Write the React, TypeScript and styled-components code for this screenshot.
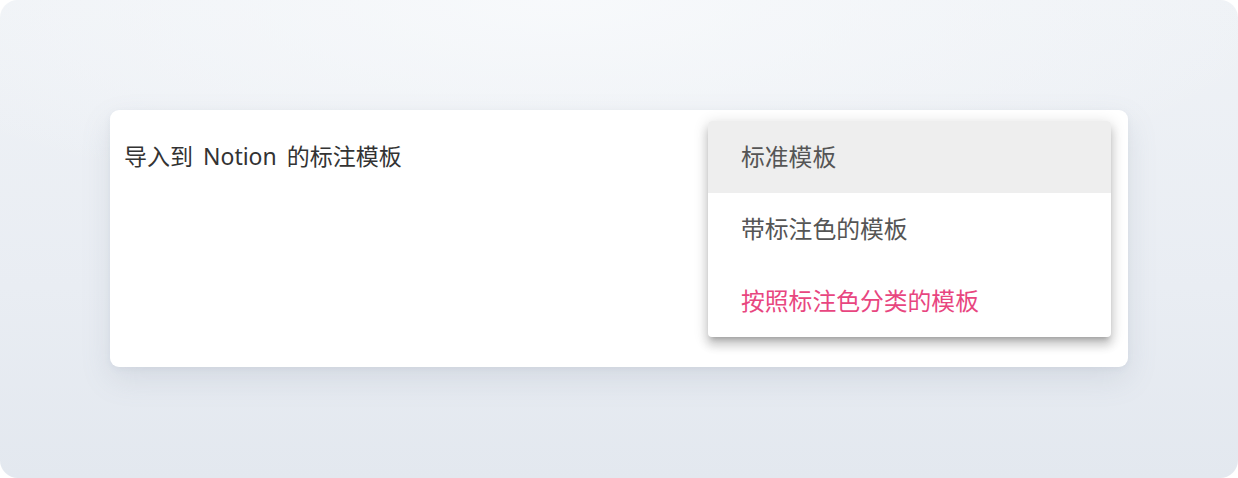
import styled, { createGlobalStyle } from 'styled-components';

const GlobalStyle = createGlobalStyle`
  html, body {
    margin: 0;
    padding: 0;
    background: #ffffff;
  }
  body {
    font-family: "Noto Sans", "Noto Sans CJK SC", sans-serif;
  }
`;

const Frame = styled.div`
  width: 1238px;
  height: 478px;
  box-sizing: border-box;
  border-radius: 18px;
  background:
    radial-gradient(ellipse 60% 45% at 45% 0%, rgba(248, 250, 252, 0.9) 0%, rgba(248, 250, 252, 0) 100%),
    linear-gradient(180deg, #eff2f6 0%, #e9edf3 60%, #e3e8ef 100%);
  padding: 110px 110px 111px 110px;
  overflow: hidden;
`;

const Card = styled.div`
  position: relative;
  height: 100%;
  box-sizing: border-box;
  background: #ffffff;
  border-radius: 9px;
  box-shadow: 0 12px 30px rgba(120, 130, 150, 0.16), 0 2px 6px rgba(120, 130, 150, 0.08);
  padding: 31px 14px 0 14px;
`;

const Title = styled.div`
  font-size: 23px;
  line-height: 30px;
  color: #333333;
  word-spacing: 4px;
`;

const Menu = styled.ul`
  position: absolute;
  top: 11px;
  right: 17px;
  width: 403px;
  margin: 0;
  padding: 0;
  list-style: none;
  background: #ffffff;
  border-radius: 4px;
  overflow: hidden;
  box-shadow: 0 5px 5px -3px rgba(0, 0, 0, 0.2), 0 8px 10px 1px rgba(0, 0, 0, 0.14),
    0 3px 14px 2px rgba(0, 0, 0, 0.12);
`;

const Item = styled.li<{ $active?: boolean; $accent?: boolean }>`
  height: 72px;
  box-sizing: border-box;
  display: flex;
  align-items: center;
  padding: 0 0 4px 33px;
  font-size: 23.8px;
  color: ${(p) => (p.$accent ? '#e8467f' : '#555555')};
  background: ${(p) => (p.$active ? '#eeeeee' : 'transparent')};
`;

export default function App() {
  return (
    <>
      <GlobalStyle />
      <Frame>
        <Card>
          <Title>导入到 Notion 的标注模板</Title>
          <Menu>
            <Item $active>标准模板</Item>
            <Item>带标注色的模板</Item>
            <Item $accent>按照标注色分类的模板</Item>
          </Menu>
        </Card>
      </Frame>
    </>
  );
}
